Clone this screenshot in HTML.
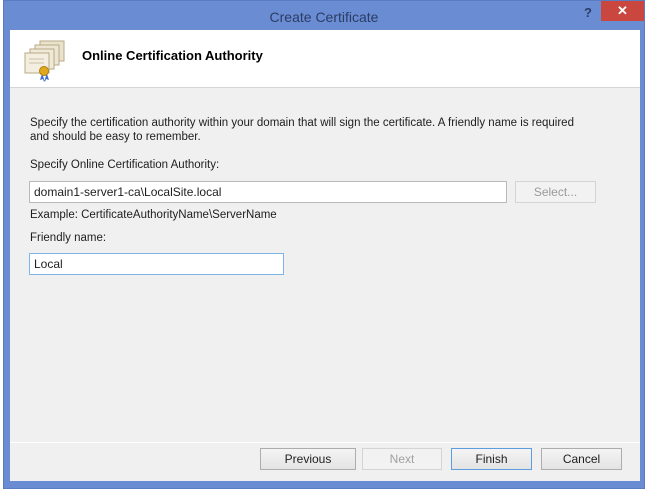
<!DOCTYPE html>
<html><head><meta charset="utf-8"><style>
*{margin:0;padding:0;box-sizing:border-box}
body{width:650px;height:491px;background:#fff;position:relative;overflow:hidden;font-family:"Liberation Sans",sans-serif;font-size:11.5px;color:#1e1e1e}
.frame{position:absolute;left:3px;top:0;width:642px;height:489px;background:#6a8cd3;border:1px solid #5a7cc0}
.title{position:absolute;left:0;right:0;top:8px;text-align:center;font-size:14px;color:#2c3c66}
.help{position:absolute;left:580px;top:4px;font-weight:bold;color:#2c3c66;font-size:13px}
.close{position:absolute;left:597px;top:0;width:43px;height:20px;background:#c9473f;color:#fff;text-align:center;font-size:13px;line-height:20px;font-weight:bold}
.inner{position:absolute;left:10px;top:30px;width:630px;height:451px;background:#f0f0f0}
.head{position:absolute;left:0;top:0;width:630px;height:58px;background:#fff;border-bottom:1px solid #d6d6d6}
.h1{position:absolute;left:72px;top:18px;font-weight:bold;font-size:13px;color:#000}
.t{position:absolute;left:20px;white-space:nowrap}
.inp{position:absolute;background:#fff;border:1px solid #b8b8b8;height:22px;padding:3px 4px;font-size:12px}
.btn{position:absolute;top:418px;height:22px;border:1px solid #adadad;background:linear-gradient(#f4f4f4,#e4e4e4);text-align:center;line-height:20px;font-size:12px}
.sep{position:absolute;left:0;top:412px;width:630px;height:1px;background:#dcdcdc;border-bottom:1px solid #fff}
</style></head><body>
<div class="frame">
<div class="title">Create Certificate</div>
<div class="help">?</div>
<div class="close">✕</div>
</div>
<div class="inner">
<div class="head">
<svg style="position:absolute;left:10px;top:8px" width="50" height="44" viewBox="0 0 50 44">
<rect x="20" y="3" width="24" height="20" fill="#e9e2cc" stroke="#b9a985"/>
<rect x="15" y="7" width="24" height="20" fill="#ece6d2" stroke="#b9a985"/>
<rect x="10" y="11" width="24" height="20" fill="#efe9d8" stroke="#b9a985"/>
<rect x="5" y="15" width="24" height="20" fill="#f3eee0" stroke="#b9a985"/>
<line x1="9" y1="21" x2="24" y2="21" stroke="#c9c0a8"/><line x1="9" y1="25" x2="24" y2="25" stroke="#c9c0a8"/>
<path d="M22 36 l-2 6 3-1 1 3 2-6z M27 36 l2 6-3-1-1 3-2-6z" fill="#3d6ed0"/>
<circle cx="24" cy="33" r="4.5" fill="#e0a81c" stroke="#b07d10"/>
</svg>
<div class="h1">Online Certification Authority</div>
</div>
<div class="t" style="top:86px;line-height:14px">Specify the certification authority within your domain that will sign the certificate. A friendly name is required<br>and should be easy to remember.</div>
<div class="t" style="top:129px">Specify Online Certification Authority:</div>
<div class="inp" style="left:19px;top:151px;width:478px">domain1-server1-ca\LocalSite.local</div>
<div class="btn" style="left:505px;top:151px;width:81px;color:#9a9a9a;border-color:#d4d4d4;background:#f2f2f2">Select...</div>
<div class="t" style="top:179px">Example: CertificateAuthorityName\ServerName</div>
<div class="t" style="top:202px">Friendly name:</div>
<div class="inp" style="left:19px;top:223px;width:255px;border-color:#7eb4ea">Local</div>
<div class="sep"></div>
<div class="btn" style="left:250px;width:96px">Previous</div>
<div class="btn" style="left:352px;width:80px;color:#a0a0a0;border-color:#d4d4d4;background:#f2f2f2">Next</div>
<div class="btn" style="left:441px;width:81px;border-color:#5e9ee0">Finish</div>
<div class="btn" style="left:531px;width:81px">Cancel</div>
</div>
</body></html>
